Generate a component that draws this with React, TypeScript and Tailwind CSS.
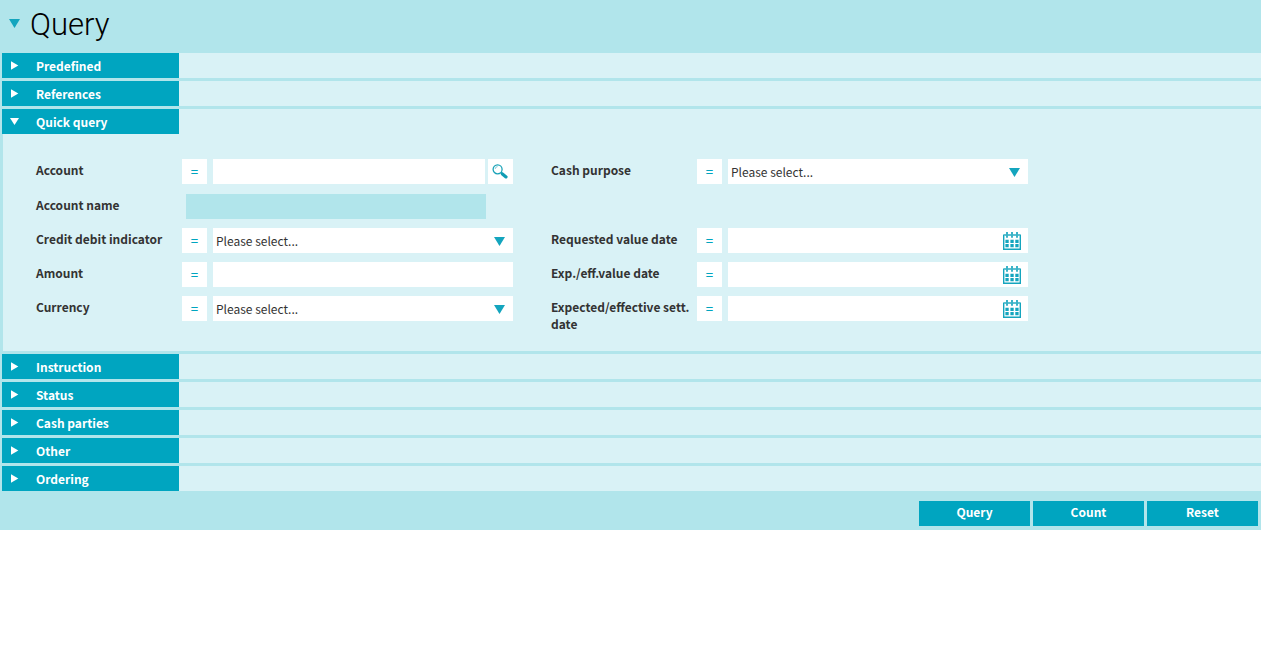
import { useState } from "react";
import type { ReactNode } from "react";

function DownTriangle({ className }: { className?: string }) {
  return (
    <svg viewBox="0 0 11 9" className={`h-[9px] w-[11px] shrink-0 ${className ?? ""}`} aria-hidden="true">
      <path d="M0 0H11L5.5 9Z" fill="currentColor" />
    </svg>
  );
}

function SectionMarker({ open }: { open: boolean }) {
  return (
    <svg viewBox="0 0 11 9" className="h-[9px] w-[11px] shrink-0" aria-hidden="true">
      <path d={open ? "M1 1H10L5.5 8Z" : "M2 0.3V8.7L9.3 4.5Z"} fill="currentColor" />
    </svg>
  );
}

function SearchIcon() {
  return (
    <svg viewBox="0 0 16 15" className="h-[15px] w-4" fill="none" aria-hidden="true">
      <circle cx="5.6" cy="5.3" r="4.5" stroke="#1ba3b8" strokeWidth="1.3" />
      <path d="M3.2 4.9A2.5 2.5 0 0 1 5.6 2.6" stroke="#7dcbd8" strokeWidth="1" />
      <path d="M8.8 8.4L10.6 10" stroke="#1ba3b8" strokeWidth="1.8" />
      <path d="M10.4 9.9L14 12.9" stroke="#0f9cb4" strokeWidth="3.2" strokeLinecap="round" />
    </svg>
  );
}

function CalendarIcon() {
  return (
    <svg viewBox="0 0 18 18" className="h-[18px] w-[18px]" fill="none" aria-hidden="true">
      <path d="M0.7 2.5V17.3H17.3V2.5" stroke="#14a5be" strokeWidth="1.4" />
      <path d="M1 3H17" stroke="#5cc0d0" strokeWidth="2" />
      <path d="M4 0V5.8M9 0V5.8M14 0V5.8" stroke="#3bb3c8" strokeWidth="2" />
      <path
        d="M2.4 7.8h3.3v3.2h-3.3zM7.4 7.8h3.3v3.2h-3.3zM12.3 7.8h3.3v3.2h-3.3zM2.4 12.1h3.3v3.2h-3.3zM7.4 12.1h3.3v3.2h-3.3zM12.3 12.1h3.3v3.2h-3.3z"
        fill="#14a5be"
      />
    </svg>
  );
}

function Field({ id, label, children, operator = true }: { id: string; label: string; children: ReactNode; operator?: boolean }) {
  return (
    <div className="flex min-h-[34px] items-start">
      <label htmlFor={id} className="w-[146px] shrink-0 pt-0.5 leading-[17px] font-bold">
        {label}
      </label>
      {operator && (
        <button
          type="button"
          aria-label={`${label} operator`}
          className="mr-1.5 h-[25px] w-[25px] shrink-0 bg-white text-[13px] font-medium text-[#00a5c0]"
        >
          =
        </button>
      )}
      {children}
    </div>
  );
}

function SelectBox({ id }: { id: string }) {
  return (
    <div className="relative w-[300px]">
      <select id={id} className="block h-[25px] w-full appearance-none bg-white px-[3px]">
        <option>Please select...</option>
      </select>
      <DownTriangle className="pointer-events-none absolute top-[9px] right-2 text-[#14a5be]" />
    </div>
  );
}

function DateBox({ id }: { id: string }) {
  return (
    <div className="flex h-[25px] w-[300px] items-center bg-white pr-[7px]">
      <input id={id} type="text" className="h-full min-w-0 flex-1 px-[3px] outline-none" />
      <button type="button" aria-label="Open calendar">
        <CalendarIcon />
      </button>
    </div>
  );
}

function QuickQuery() {
  return (
    <div className="ml-px flex flex-wrap gap-x-[38px] bg-[#d9f2f6] pt-[25px] pb-[19px] pl-[33px]">
      <div>
        <Field id="account" label="Account">
          <input id="account" type="text" className="h-[25px] w-[272px] bg-white px-[3px]" />
          <button type="button" aria-label="Search account" className="ml-[3px] flex h-[25px] w-[25px] items-center bg-white pl-1">
            <SearchIcon />
          </button>
        </Field>
        <div className="pt-px">
          <Field id="account-name" label="Account name" operator={false}>
            <input id="account-name" type="text" readOnly className="ml-1 h-[25px] w-[300px] bg-[#b1e5eb] px-[3px]" />
          </Field>
        </div>
        <Field id="indicator" label="Credit debit indicator">
          <SelectBox id="indicator" />
        </Field>
        <Field id="amount" label="Amount">
          <input id="amount" type="text" className="h-[25px] w-[300px] bg-white px-[3px]" />
        </Field>
        <Field id="currency" label="Currency">
          <SelectBox id="currency" />
        </Field>
      </div>
      <div>
        <div className="pb-[35px]">
          <Field id="purpose" label="Cash purpose">
            <SelectBox id="purpose" />
          </Field>
        </div>
        <Field id="requested" label="Requested value date">
          <DateBox id="requested" />
        </Field>
        <Field id="value-date" label="Exp./eff.value date">
          <DateBox id="value-date" />
        </Field>
        <Field id="settlement" label="Expected/effective sett. date">
          <DateBox id="settlement" />
        </Field>
      </div>
    </div>
  );
}

const sections = ["Predefined", "References", "Quick query", "Instruction", "Status", "Cash parties", "Other", "Ordering"];

export default function App() {
  const [open, setOpen] = useState("Quick query");
  return (
    <main className="bg-[#b1e5eb] font-['Noto_Sans_CJK_SC',sans-serif] text-[12px] text-[#333]">
      <header className="flex h-[53px] items-center gap-2.5 pl-[9px]">
        <DownTriangle className="mb-1.5 text-[#14a5be]" />
        <h1 className="pb-1 font-['Roboto',sans-serif] text-[31px] leading-[40px] font-light text-black">Query</h1>
      </header>
      <div className="flex flex-col gap-[3px] pl-0.5">
        {sections.map((name) => (
          <section key={name}>
            <h2 className="flex h-[25px] bg-[#d9f2f6]">
              <button
                type="button"
                aria-expanded={open === name}
                onClick={() => setOpen(open === name ? "" : name)}
                className="flex w-[177px] items-center bg-[#00a5c0] pl-[7px] text-left font-bold text-white"
              >
                <SectionMarker open={open === name} />
                <span className="pl-4">{name}</span>
              </button>
            </h2>
            {open === name && name === "Quick query" && <QuickQuery />}
          </section>
        ))}
      </div>
      <footer className="flex justify-end gap-[3px] pt-2.5 pr-[3px] pb-1">
        {["Query", "Count", "Reset"].map((name) => (
          <button key={name} type="button" className="h-[25px] w-[111px] bg-[#00a5c0] pb-[3px] font-bold text-white">
            {name}
          </button>
        ))}
      </footer>
    </main>
  );
}
